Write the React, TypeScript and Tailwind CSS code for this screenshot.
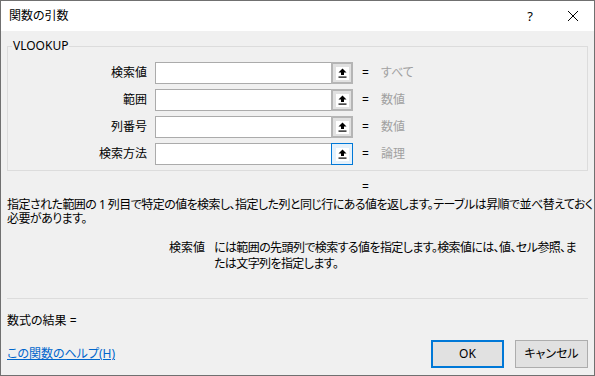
import React from 'react';

const CollapseIcon = () => (
  <svg width="9" height="10" viewBox="0 0 9 10">
    <path d="M4.5 0.5 L8.5 4.5 L6 4.5 L6 7 L3 7 L3 4.5 L0.5 4.5 Z" fill="#000" />
    <rect x="0.5" y="8.5" width="8" height="1.2" fill="#000" />
  </svg>
);

const args = [
  { label: '検索値', value: 'すべて' },
  { label: '範囲', value: '数値' },
  { label: '列番号', value: '数値' },
  { label: '検索方法', value: '論理', focused: true },
];

const ArgRow = ({ label, value, focused }: { label: string; value: string; focused?: boolean }) => (
  <div className="flex h-[22px] items-center">
    <div className="w-[139px] shrink-0 text-right leading-[14px]">{label}</div>
    <div className="ml-[8px] flex h-full w-[198px] shrink-0">
      <div className="flex-1 border border-r-0 border-[#ababab] bg-white" />
      {focused ? (
        <div className="flex w-[22px] items-center justify-center border border-[#0078d7] bg-[#e5f1fb]">
          <div className="flex h-[13px] w-[13px] items-center justify-center bg-white">
            <CollapseIcon />
          </div>
        </div>
      ) : (
        <div className="flex w-[22px] items-center justify-center border-2 border-[#b5b5b5] bg-[#e1e1e1]">
          <div className="flex h-[13px] w-[13px] items-center justify-center bg-white">
            <CollapseIcon />
          </div>
        </div>
      )}
    </div>
    <span className="ml-[9px] w-[8px] leading-[14px]">=</span>
    <span className="ml-[11px] leading-[14px] text-[#a0a0a0]">{value}</span>
  </div>
);

export default function App() {
  return (
    <div className="flex h-[376px] w-[595px] flex-col border border-[#707070] bg-[#f0f0f0] font-['Noto_Sans','Noto_Sans_CJK_JP',sans-serif] text-[12px] text-black [font-feature-settings:'palt']">
      {/* title bar */}
      <div className="flex h-[30px] items-center bg-white pl-[8px] pr-[15px]">
        <span className="leading-[14px]">関数の引数</span>
        <span className="ml-auto text-[13px] leading-[14px]">?</span>
        <svg className="ml-[34px]" width="12" height="12" viewBox="0 0 12 12">
          <path d="M1 1 L11 11 M11 1 L1 11" stroke="#000" strokeWidth="1" />
        </svg>
      </div>

      <div className="flex flex-1 flex-col px-[6px]">
        <div className="relative mt-[15px] flex flex-col gap-[5px] border border-[#dcdcdc] pb-[5px] pt-[15px]">
          <span className="absolute -top-[8px] left-[4px] bg-[#f0f0f0] px-[1px] leading-[14px]">VLOOKUP</span>
          {args.map((a) => (
            <ArgRow key={a.label} {...a} />
          ))}
        </div>

        <div className="ml-[355px] mt-[9px] leading-[14px]">=</div>

        <p className="mt-[4px] whitespace-nowrap leading-[14px] tracking-[-0.55px]">
          指定された範囲の 1 列目で特定の値を検索し、指定した列と同じ行にある値を返します。テーブルは昇順で並べ替えておく
          <br />
          必要があります。
        </p>

        <div className="mt-[14px] flex leading-[15.5px]">
          <div className="w-[198px] shrink-0 text-right">検索値</div>
          <p className="ml-[9px] whitespace-nowrap tracking-[-0.6px]">
            には範囲の先頭列で検索する値を指定します。検索値には、値、セル参照、ま
            <br />
            たは文字列を指定します。
          </p>
        </div>

        <div className="mt-[27px] h-px bg-[#dcdcdc]" />

        <div className="mt-[15px] leading-[14px]">数式の結果 =</div>

        <div className="mt-[12px] flex h-[28px] items-center">
          <a className="leading-[14px] text-[#0066cc] underline">この関数のヘルプ(H)</a>
          <button className="ml-auto flex h-[28px] w-[73px] items-center justify-center border-2 border-[#0078d7] bg-[#e1e1e1] leading-[14px]">
            OK
          </button>
          <button className="ml-[11px] flex h-[28px] w-[73px] items-center justify-center border border-[#adadad] bg-[#e1e1e1] leading-[14px]">
            キャンセル
          </button>
        </div>
      </div>
    </div>
  );
}
